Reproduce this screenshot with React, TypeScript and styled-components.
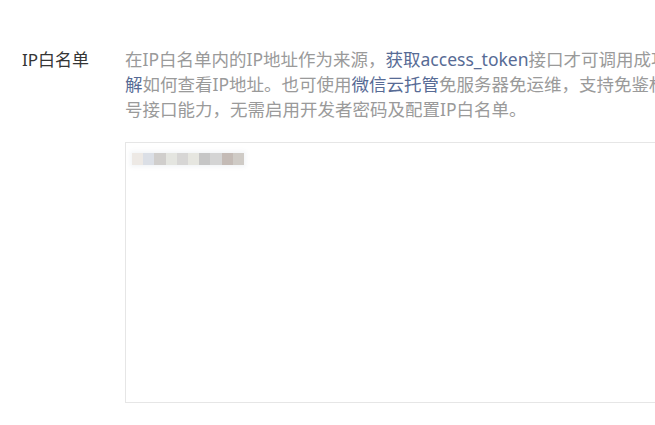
import styled, { createGlobalStyle } from "styled-components";

const GlobalStyle = createGlobalStyle`
  html, body {
    margin: 0;
    padding: 0;
    background: #ffffff;
    overflow: hidden;
  }
  body {
    font-family: "Noto Sans", "Noto Sans CJK SC", sans-serif;
  }
`;

const Page = styled.div`
  width: 655px;
  height: 425px;
  overflow: hidden;
  box-sizing: border-box;
  padding: 47px 0 0 22px;
`;

const FormRow = styled.div`
  display: flex;
  align-items: flex-start;
`;

const Label = styled.div`
  flex: 0 0 103px;
  font-size: 17px;
  line-height: 25px;
  color: #353535;
`;

const Field = styled.div`
  flex: 0 0 auto;
  display: flex;
  flex-direction: column;
  gap: 20px;
`;

const Tips = styled.p`
  margin: 0;
  font-size: 17.5px;
  line-height: 25px;
  color: #9a9a9a;
  white-space: nowrap;
`;

const Link = styled.a`
  color: #576b95;
  text-decoration: none;
`;

const TextArea = styled.div`
  width: 620px;
  height: 261px;
  box-sizing: border-box;
  border: 1px solid #e6e6e6;
  padding: 10px 6px;
`;

const Mosaic = styled.div`
  display: flex;
  width: fit-content;
  height: 12px;
  box-shadow: 0 0 4px 2px rgba(235, 238, 242, 0.6);
`;

const Pixel = styled.span<{ $c: string }>`
  display: block;
  width: 11.2px;
  height: 12px;
  background: ${(p) => p.$c};
`;

// blurred IP list, one colour per mosaic cell
const pixels = [
  "#ede9e5",
  "#dbdfe6",
  "#d0cecc",
  "#e4e5e0",
  "#d7d6d5",
  "#e6e6e0",
  "#c6c6c6",
  "#d4d4d4",
  "#c4bbb6",
  "#cfcbc6",
];

export default function App() {
  return (
    <>
      <GlobalStyle />
      <Page>
        <FormRow>
          <Label>IP白名单</Label>
          <Field>
            <Tips>
              在IP白名单内的IP地址作为来源，<Link href="#">获取access_token</Link>
              接口才可调用成功。<Link href="#">了</Link>
              <br />
              <Link href="#">解</Link>如何查看IP地址。也可使用
              <Link href="#">微信云托管</Link>免服务器免运维，支持免鉴权调用公众
              <br />
              号接口能力，无需启用开发者密码及配置IP白名单。
            </Tips>
            <TextArea>
              <Mosaic>
                {pixels.map((c, i) => (
                  <Pixel key={i} $c={c} />
                ))}
              </Mosaic>
            </TextArea>
          </Field>
        </FormRow>
      </Page>
    </>
  );
}
